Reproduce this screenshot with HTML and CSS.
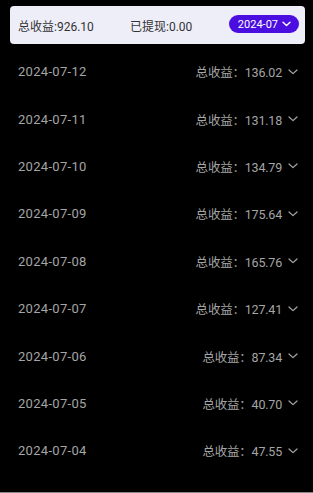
FILE: index.html
```html
<!DOCTYPE html>
<html lang="zh">
<head>
<meta charset="utf-8">
<link rel="stylesheet" href="styles.css">
</head>
<body>
<div class="page">
  <div class="summary">
    <span class="sum-item">总收益:926.10</span>
    <span class="sum-item withdraw">已提现:0.00</span>
    <button class="month-btn">2024-07
      <svg class="chev" width="9" height="6" viewBox="0 0 9 6"><path d="M1 1.2 L4.5 4.5 L8 1.2" fill="none" stroke="#fff" stroke-width="1.4" stroke-linecap="round" stroke-linejoin="round"/></svg>
    </button>
  </div>
  <ul class="list">
    <li class="row"><span class="date">2024-07-12</span><span class="amt">总收益：136.02<svg class="chev" width="10" height="6" viewBox="0 0 10 6"><path d="M1 1 L5 4.6 L9 1" fill="none" stroke="#a8a8a8" stroke-width="1.2" stroke-linecap="round" stroke-linejoin="round"/></svg></span></li>
    <li class="row"><span class="date">2024-07-11</span><span class="amt">总收益：131.18<svg class="chev" width="10" height="6" viewBox="0 0 10 6"><path d="M1 1 L5 4.6 L9 1" fill="none" stroke="#a8a8a8" stroke-width="1.2" stroke-linecap="round" stroke-linejoin="round"/></svg></span></li>
    <li class="row"><span class="date">2024-07-10</span><span class="amt">总收益：134.79<svg class="chev" width="10" height="6" viewBox="0 0 10 6"><path d="M1 1 L5 4.6 L9 1" fill="none" stroke="#a8a8a8" stroke-width="1.2" stroke-linecap="round" stroke-linejoin="round"/></svg></span></li>
    <li class="row"><span class="date">2024-07-09</span><span class="amt">总收益：175.64<svg class="chev" width="10" height="6" viewBox="0 0 10 6"><path d="M1 1 L5 4.6 L9 1" fill="none" stroke="#a8a8a8" stroke-width="1.2" stroke-linecap="round" stroke-linejoin="round"/></svg></span></li>
    <li class="row"><span class="date">2024-07-08</span><span class="amt">总收益：165.76<svg class="chev" width="10" height="6" viewBox="0 0 10 6"><path d="M1 1 L5 4.6 L9 1" fill="none" stroke="#a8a8a8" stroke-width="1.2" stroke-linecap="round" stroke-linejoin="round"/></svg></span></li>
    <li class="row"><span class="date">2024-07-07</span><span class="amt">总收益：127.41<svg class="chev" width="10" height="6" viewBox="0 0 10 6"><path d="M1 1 L5 4.6 L9 1" fill="none" stroke="#a8a8a8" stroke-width="1.2" stroke-linecap="round" stroke-linejoin="round"/></svg></span></li>
    <li class="row"><span class="date">2024-07-06</span><span class="amt">总收益：87.34<svg class="chev" width="10" height="6" viewBox="0 0 10 6"><path d="M1 1 L5 4.6 L9 1" fill="none" stroke="#a8a8a8" stroke-width="1.2" stroke-linecap="round" stroke-linejoin="round"/></svg></span></li>
    <li class="row"><span class="date">2024-07-05</span><span class="amt">总收益：40.70<svg class="chev" width="10" height="6" viewBox="0 0 10 6"><path d="M1 1 L5 4.6 L9 1" fill="none" stroke="#a8a8a8" stroke-width="1.2" stroke-linecap="round" stroke-linejoin="round"/></svg></span></li>
    <li class="row"><span class="date">2024-07-04</span><span class="amt">总收益：47.55<svg class="chev" width="10" height="6" viewBox="0 0 10 6"><path d="M1 1 L5 4.6 L9 1" fill="none" stroke="#a8a8a8" stroke-width="1.2" stroke-linecap="round" stroke-linejoin="round"/></svg></span></li>
  </ul>
  <div class="bottom-line"></div>
</div>
</body>
</html>
```
FILE: styles.css
```css
html, body {
  margin: 0;
  padding: 0;
  background: #000;
}
body {
  font-family: "Roboto", "Noto Sans CJK SC", sans-serif;
  width: 313px;
  height: 493px;
  overflow: hidden;
}
.page {
  height: 493px;
  display: flex;
  flex-direction: column;
  padding-top: 6px;
  box-sizing: border-box;
}
.summary {
  margin: 0 8px 0 10px;
  height: 38px;
  background: #eeeef9;
  border-radius: 4px;
  display: flex;
  align-items: center;
  padding: 0 6px 0 8px;
  box-sizing: border-box;
  font-size: 12px;
  color: #333;
}
.sum-item {
  width: 112px;
  white-space: nowrap;
}
.withdraw {
  flex: 1;
}
.month-btn {
  border: 0;
  background: #4a0ee0;
  color: #fff;
  height: 18px;
  border-radius: 9px;
  padding: 0 8px 0 9px;
  font-family: inherit;
  font-size: 11px;
  display: flex;
  align-items: center;
  gap: 4px;
  margin-top: -2px;
  white-space: nowrap;
}
.list {
  list-style: none;
  margin: 4px 0 0;
  padding: 0;
  flex: 1;
}
.row {
  height: 47.4px;
  display: flex;
  align-items: center;
  justify-content: space-between;
  padding: 0 15px 0 18px;
  color: #a5a5a5;
  font-size: 13px;
}
.date {
  letter-spacing: 0.3px;
}
.amt {
  display: flex;
  align-items: center;
  gap: 6px;
  font-size: 12.5px;
  letter-spacing: -0.2px;
}
.bottom-line {
  height: 1px;
  background: #888;
}
```
